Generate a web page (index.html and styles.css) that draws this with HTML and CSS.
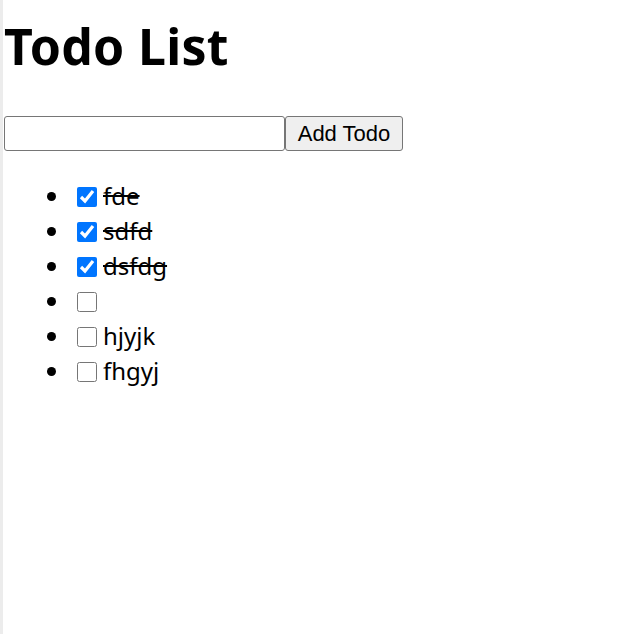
FILE: index.html
```html
<!DOCTYPE html>
<html>
<head>
<meta charset="utf-8">
<title>Todo List</title>
<link rel="stylesheet" href="styles.css">
</head>
<body>
<div class="app">
  <h1 class="title">Todo List</h1>
  <div class="form">
    <input class="field" type="text">
    <button class="add">Add Todo</button>
  </div>
  <ul class="list">
    <li class="item"><input class="check" type="checkbox" checked><span class="done">fde</span></li>
    <li class="item"><input class="check" type="checkbox" checked><span class="done">sdfd</span></li>
    <li class="item"><input class="check" type="checkbox" checked><span class="done">dsfdg</span></li>
    <li class="item"><input class="check" type="checkbox"><span></span></li>
    <li class="item"><input class="check" type="checkbox"><span>hjyjk</span></li>
    <li class="item"><input class="check" type="checkbox"><span>fhgyj</span></li>
  </ul>
</div>
</body>
</html>
```

FILE: styles.css
```css
html, body {
  margin: 0;
  padding: 0;
  background: #fff;
}
body {
  font-family: "Noto Sans", "Open Sans", sans-serif;
  color: #000;
  font-size: 24px;
}
.app {
  min-height: 634px;
  border-left: 3px solid #ececec;
  padding-left: 1px;
  box-sizing: border-box;
}
.title {
  margin: 0;
  padding-top: 13px;
  font-size: 50px;
  font-weight: 700;
  line-height: 66px;
  letter-spacing: 0.3px;
}
.form {
  display: flex;
  margin-top: 37px;
  height: 35px;
}
.field {
  width: 281px;
  height: 35px;
  box-sizing: border-box;
  margin: 0;
  border: 1px solid #767676;
  border-radius: 3px;
  padding: 2px 3px;
  font-family: "Liberation Sans", Arial, sans-serif;
  font-size: 20px;
}
.add {
  width: 118px;
  height: 35px;
  box-sizing: border-box;
  margin: 0;
  border: 1px solid #767676;
  border-radius: 3px;
  background: #efefef;
  font-family: "Liberation Sans", Arial, sans-serif;
  font-size: 22px;
  color: #000;
  padding: 0 4px;
}
.list {
  margin: 27px 0 0 0;
  padding-left: 67px;
  list-style: disc;
}
.item {
  height: 35px;
  line-height: 35px;
}
.check {
  width: 20px;
  height: 20px;
  margin: 0 6px 0 6px;
  vertical-align: -2px;
  accent-color: #0075ff;
}
.done {
  text-decoration: line-through;
}
```
